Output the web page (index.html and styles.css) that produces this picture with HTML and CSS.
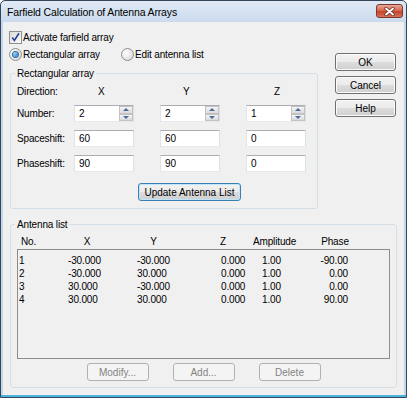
FILE: index.html
```html
<!DOCTYPE html>
<html lang="en">
  <head>
    <meta charset="UTF-8" />
    <meta name="viewport" content="width=device-width, initial-scale=1.0" />
    <title>Farfield Calculation of Antenna Arrays</title>
    <link rel="stylesheet" href="styles.css">
  </head>
  <body>
    <div class="window">
      <!-- Title bar -->
      <div class="titlebar">
        <span class="title">Farfield Calculation of Antenna Arrays</span>
        <span class="close">
          <svg width="11" height="9" viewBox="0 0 11 9">
            <path d="M2 1.5 L9 7.5 M9 1.5 L2 7.5" stroke="#6b3026" stroke-width="3.4" stroke-linecap="round" />
            <path d="M2 1.5 L9 7.5 M9 1.5 L2 7.5" stroke="#ffffff" stroke-width="1.8" stroke-linecap="round" />
          </svg>
        </span>
      </div>

      <div class="client">
        <div class="top">
          <div class="left">
            <label class="check">
              <span class="box">
                <svg width="11" height="11" viewBox="0 0 11 11">
                  <path d="M2.2 5.6 L4.4 8.4 L9 1.2" fill="none" stroke="#233f8f" stroke-width="1.6" />
                </svg>
              </span>
              Activate farfield array
            </label>

            <div class="radios">
              <label class="radio first"><span class="dot on"></span>Rectangular array</label>
              <label class="radio"><span class="dot"></span>Edit antenna list</label>
            </div>

            <!-- Rectangular array group -->
            <div class="group rect">
              <div class="legend">Rectangular array</div>
              <div class="rect-grid">
                <span>Direction:</span>
                <span class="head hx">X</span>
                <span class="head hy">Y</span>
                <span class="head hz">Z</span>

                <span>Number:</span>
                <div class="field"><input type="text" value="2" /><span class="spin"><i class="up"></i><i class="down"></i></span></div>
                <div class="field"><input type="text" value="2" /><span class="spin"><i class="up"></i><i class="down"></i></span></div>
                <div class="field"><input type="text" value="1" /><span class="spin"><i class="up"></i><i class="down"></i></span></div>

                <span>Spaceshift:</span>
                <div class="field"><input type="text" value="60" /></div>
                <div class="field"><input type="text" value="60" /></div>
                <div class="field"><input type="text" value="0" /></div>

                <span>Phaseshift:</span>
                <div class="field"><input type="text" value="90" /></div>
                <div class="field"><input type="text" value="90" /></div>
                <div class="field"><input type="text" value="0" /></div>
              </div>
              <button class="btn btn-default btn-update">Update Antenna List</button>
            </div>
          </div>

          <div class="side">
            <button class="btn">OK</button>
            <button class="btn">Cancel</button>
            <button class="btn">Help</button>
          </div>
        </div>

        <!-- Antenna list group -->
        <div class="group antennas">
          <div class="legend">Antenna list</div>
          <div class="list-head">
            <span class="c-no">No.</span>
            <span>X</span>
            <span>Y</span>
            <span>Z</span>
            <span>Amplitude</span>
            <span>Phase</span>
          </div>
          <div class="listbox">
            <div class="row"><span>1</span><span>-30.000</span><span>-30.000</span><span>0.000</span><span>1.00</span><span class="c-phase">-90.00</span></div>
            <div class="row"><span>2</span><span>-30.000</span><span>30.000</span><span>0.000</span><span>1.00</span><span class="c-phase">0.00</span></div>
            <div class="row"><span>3</span><span>30.000</span><span>-30.000</span><span>0.000</span><span>1.00</span><span class="c-phase">0.00</span></div>
            <div class="row"><span>4</span><span>30.000</span><span>30.000</span><span>0.000</span><span>1.00</span><span class="c-phase">90.00</span></div>
          </div>
          <div class="list-buttons">
            <button class="btn" disabled>Modify...</button>
            <button class="btn" disabled>Add...</button>
            <button class="btn" disabled>Delete</button>
          </div>
        </div>
      </div>
    </div>
  </body>
</html>
```

FILE: styles.css
```css
body {
  margin: 0;
  font-family: "Liberation Sans", Arial, sans-serif;
  font-size: 10px;
  letter-spacing: -0.15px;
  color: #000;
}

/* Window frame */
.window {
  width: 407px;
  height: 398px;
  box-sizing: border-box;
  border: 1px solid #34465a;
  border-radius: 5px 5px 0 0;
  padding: 0 2px 2px 2px;
  background: linear-gradient(#e1eaf6 0, #cbdbee 21px, #c2d6ec 21px);
  box-shadow: inset 0 -2px 0 #4db4dd;
}

.titlebar {
  display: flex;
  height: 21px;
  padding-left: 4px;
}

.title {
  line-height: 22px;
  font-size: 10.5px;
  letter-spacing: -0.15px;
}

.close {
  margin: 3px 1px 0 auto;
  width: 27px;
  height: 14px;
  box-sizing: border-box;
  border: 1px solid #7a3a30;
  border-radius: 3px;
  display: flex;
  align-items: center;
  justify-content: center;
  background: linear-gradient(#e9a898 0%, #d86a52 45%, #c4432b 55%, #d7735a 100%);
}

/* Client area */
.client {
  height: 373px;
  box-sizing: border-box;
  padding: 7px 7px 0 7px;
  background-color: #f0f0f0;
}

.top {
  display: flex;
}

.left {
  width: 308px;
}

.side {
  display: flex;
  flex-direction: column;
  gap: 5px;
  margin: 24px 0 0 17px;
}

.side .btn {
  width: 61px;
}

/* Checkbox and radios */
.check,
.radio {
  display: flex;
  align-items: center;
  height: 17px;
  gap: 1px;
}

.check {
  margin-left: -1px;
}

.box {
  width: 13px;
  height: 13px;
  box-sizing: border-box;
  border: 1px solid #8e8f8f;
  background: linear-gradient(135deg, #dcdcdc, #fbfbfb);
  display: flex;
  align-items: center;
  justify-content: center;
}

.radios {
  display: flex;
  margin-left: -1px;
}

.radio.first {
  width: 112px;
}

.dot {
  width: 13px;
  height: 13px;
  box-sizing: border-box;
  border: 1px solid #8e8f8f;
  border-radius: 50%;
  background: radial-gradient(circle at 35% 35%, #ffffff, #d2d2d2);
  display: flex;
  align-items: center;
  justify-content: center;
}

.dot.on::after {
  content: "";
  width: 5px;
  height: 5px;
  border-radius: 50%;
  background: radial-gradient(circle at 35% 35%, #9ad8f8, #1b5ea8);
  box-shadow: 0 0 0 1px #2c6cad;
}

/* Group boxes */
.group {
  border: 1px solid #d5dfe5;
  border-radius: 3px;
  padding: 0 6px 7px 6px;
}

.legend {
  width: fit-content;
  margin: -7px 0 0 -2px;
  padding: 0 2px;
  line-height: 13px;
  background-color: #f0f0f0;
}

.rect {
  margin-top: 10px;
}

.rect-grid {
  display: grid;
  grid-template-columns: 31px 60px 60px 60px;
  grid-template-rows: 12px 17px 17px 17px;
  column-gap: 26px;
  row-gap: 8px;
  margin-top: 5px;
  align-items: center;
  white-space: nowrap;
}

.head.hx {
  padding-left: 24px;
}

.head.hy {
  padding-left: 23px;
}

.head.hz {
  padding-left: 28px;
}

.field {
  display: flex;
  height: 17px;
  box-sizing: border-box;
  border: 1px solid;
  border-color: #abadb3 #dbdfe6 #e3e9ef #e2e3ea;
  background-color: #fff;
}

.field input {
  flex: 1;
  min-width: 0;
  border: none;
  padding: 0 0 0 4px;
  font: inherit;
  background: transparent;
  outline: none;
}

.spin {
  width: 14px;
  display: flex;
  flex-direction: column;
  background-color: #e6e6e6;
}

.spin i {
  flex: 1;
  box-sizing: border-box;
  border: 1px solid #c2c2c2;
  background: linear-gradient(#f6f6f6, #dadada);
  display: flex;
  align-items: center;
  justify-content: center;
}

.spin i::after {
  content: "";
  border-left: 3px solid transparent;
  border-right: 3px solid transparent;
}

.spin .up::after {
  border-bottom: 3px solid #4a6a9a;
}

.spin .down::after {
  border-top: 3px solid #4a6a9a;
}

/* Buttons */
.btn {
  height: 18px;
  padding: 0;
  font: inherit;
  color: #000;
  border: 1px solid #707070;
  border-radius: 3px;
  background: linear-gradient(#f2f2f2 0%, #ebebeb 50%, #dddddd 50%, #cfcfcf 100%);
  box-shadow: inset 0 0 0 1px #fbfbfb;
}

.btn-default {
  border-color: #3c7fb1;
  box-shadow: inset 0 0 0 1px #bfe5fb;
}

.btn-update {
  display: block;
  width: 103px;
  margin: 11px 0 0 121px;
}

.btn:disabled {
  color: #838383;
  border-color: #adb2b5;
  background: #f4f4f4;
  box-shadow: none;
}

/* Antenna list */
.antennas {
  margin-top: 15px;
  padding-bottom: 6px;
}

.list-head {
  display: grid;
  grid-template-columns: 43px 54px 79px 60px 43px 78px;
  margin-top: 4px;
  line-height: 14px;
  text-align: center;
}

.list-head .c-no {
  text-align: left;
  padding-left: 4px;
}

.listbox {
  height: 110px;
  box-sizing: border-box;
  border: 1px solid #8d8d8d;
  padding-top: 4px;
}

.row {
  display: grid;
  grid-template-columns: 50px 69px 84px 41px 38px 48px;
  line-height: 13px;
}

.row span:first-child {
  padding-left: 1px;
}

.row .c-phase {
  text-align: right;
}

.list-buttons {
  display: flex;
  justify-content: center;
  gap: 24px;
  margin-top: 4px;
}

.list-buttons .btn {
  width: 62px;
}
```
